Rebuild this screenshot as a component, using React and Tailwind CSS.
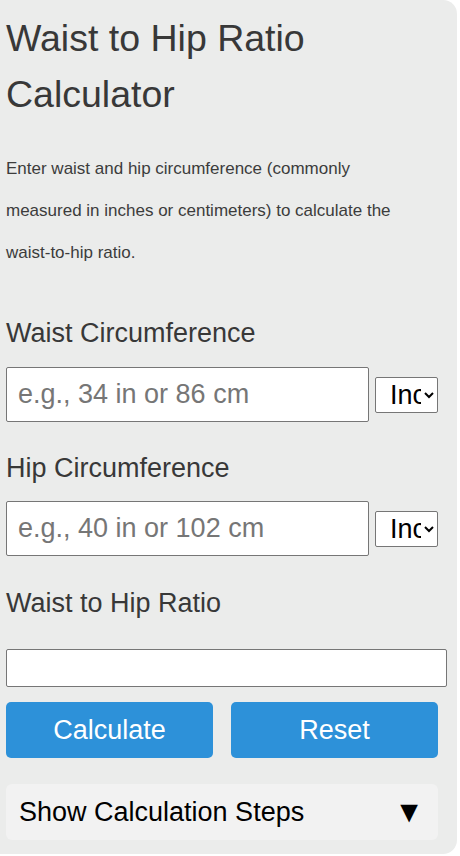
import React, { useState } from "react";

const App = () => {
    const [waist, setWaist] = useState("");
    const [hip, setHip] = useState("");
    const [ratio, setRatio] = useState("");

    const handleCalculate = () => {
        const w = parseFloat(waist);
        const h = parseFloat(hip);
        if (w > 0 && h > 0) setRatio((w / h).toFixed(2));
    };

    const handleReset = () => {
        setWaist("");
        setHip("");
        setRatio("");
    };

    return (
        <div className="min-h-screen bg-white" style={{ fontFamily: '"Liberation Sans", Arial, sans-serif' }}>
            <div className="w-[457px] min-h-[854px] bg-[#ebeceb] rounded-r-[14px] pl-[6px] pt-[10px] pb-[14px]">
                <div className="w-[432px]">
                    <h1 className="text-[37.5px] leading-[56px] text-[#383838] font-normal">
                        Waist to Hip Ratio Calculator
                    </h1>
                    <p className="mt-[26px] w-[412px] text-[17px] leading-[42px] text-[#3c3c3c]">
                        Enter waist and hip circumference (commonly measured in inches or centimeters) to calculate the waist-to-hip ratio.
                    </p>

                    <label className="block mt-[44px] text-[27px] leading-[30px] text-[#383838]">Waist Circumference</label>
                    <div className="mt-[19px] flex items-center gap-[6px]">
                        <input
                            type="text"
                            value={waist}
                            onChange={e => setWaist(e.target.value)}
                            placeholder="e.g., 34 in or 86 cm"
                            className="w-[363px] h-[55px] bg-white border border-[#767676] rounded-[2px] px-[11px] text-[27px] text-black placeholder:text-[#767676] outline-none"
                        />
                        <select className="w-[63px] h-[36px] bg-white border border-[#767676] rounded-[2px] pl-[10px] text-[27px] text-black outline-none">
                            <option>Inch</option>
                            <option>cm</option>
                        </select>
                    </div>

                    <label className="block mt-[31px] text-[27px] leading-[30px] text-[#383838]">Hip Circumference</label>
                    <div className="mt-[18px] flex items-center gap-[6px]">
                        <input
                            type="text"
                            value={hip}
                            onChange={e => setHip(e.target.value)}
                            placeholder="e.g., 40 in or 102 cm"
                            className="w-[363px] h-[55px] bg-white border border-[#767676] rounded-[2px] px-[11px] text-[27px] text-black placeholder:text-[#767676] outline-none"
                        />
                        <select className="w-[63px] h-[36px] bg-white border border-[#767676] rounded-[2px] pl-[10px] text-[27px] text-black outline-none">
                            <option>Inch</option>
                            <option>cm</option>
                        </select>
                    </div>

                    <label className="block mt-[32px] text-[27px] leading-[30px] text-[#383838]">Waist to Hip Ratio</label>
                    <input
                        type="text"
                        readOnly
                        value={ratio}
                        className="block mt-[31px] w-[441px] h-[38px] bg-white border border-[#767676] rounded-[2px] px-[8px] text-[20px] outline-none"
                    />

                    <div className="mt-[15px] flex gap-[18px]">
                        <button
                            onClick={handleCalculate}
                            className="w-[207px] h-[56px] bg-[#2d91d9] text-white text-[27px] rounded-[5px]"
                        >
                            Calculate
                        </button>
                        <button
                            onClick={handleReset}
                            className="w-[207px] h-[56px] bg-[#2d91d9] text-white text-[27px] rounded-[5px]"
                        >
                            Reset
                        </button>
                    </div>

                    <div className="mt-[26px] h-[56px] bg-[#f2f2f2] rounded-[6px] flex items-center justify-between pl-[13px] pr-[14px] text-[27px] text-black">
                        <span>Show Calculation Steps</span>
                        <span className="text-[30px] leading-none">▼</span>
                    </div>
                </div>
            </div>
        </div>
    );
};

export default App;
